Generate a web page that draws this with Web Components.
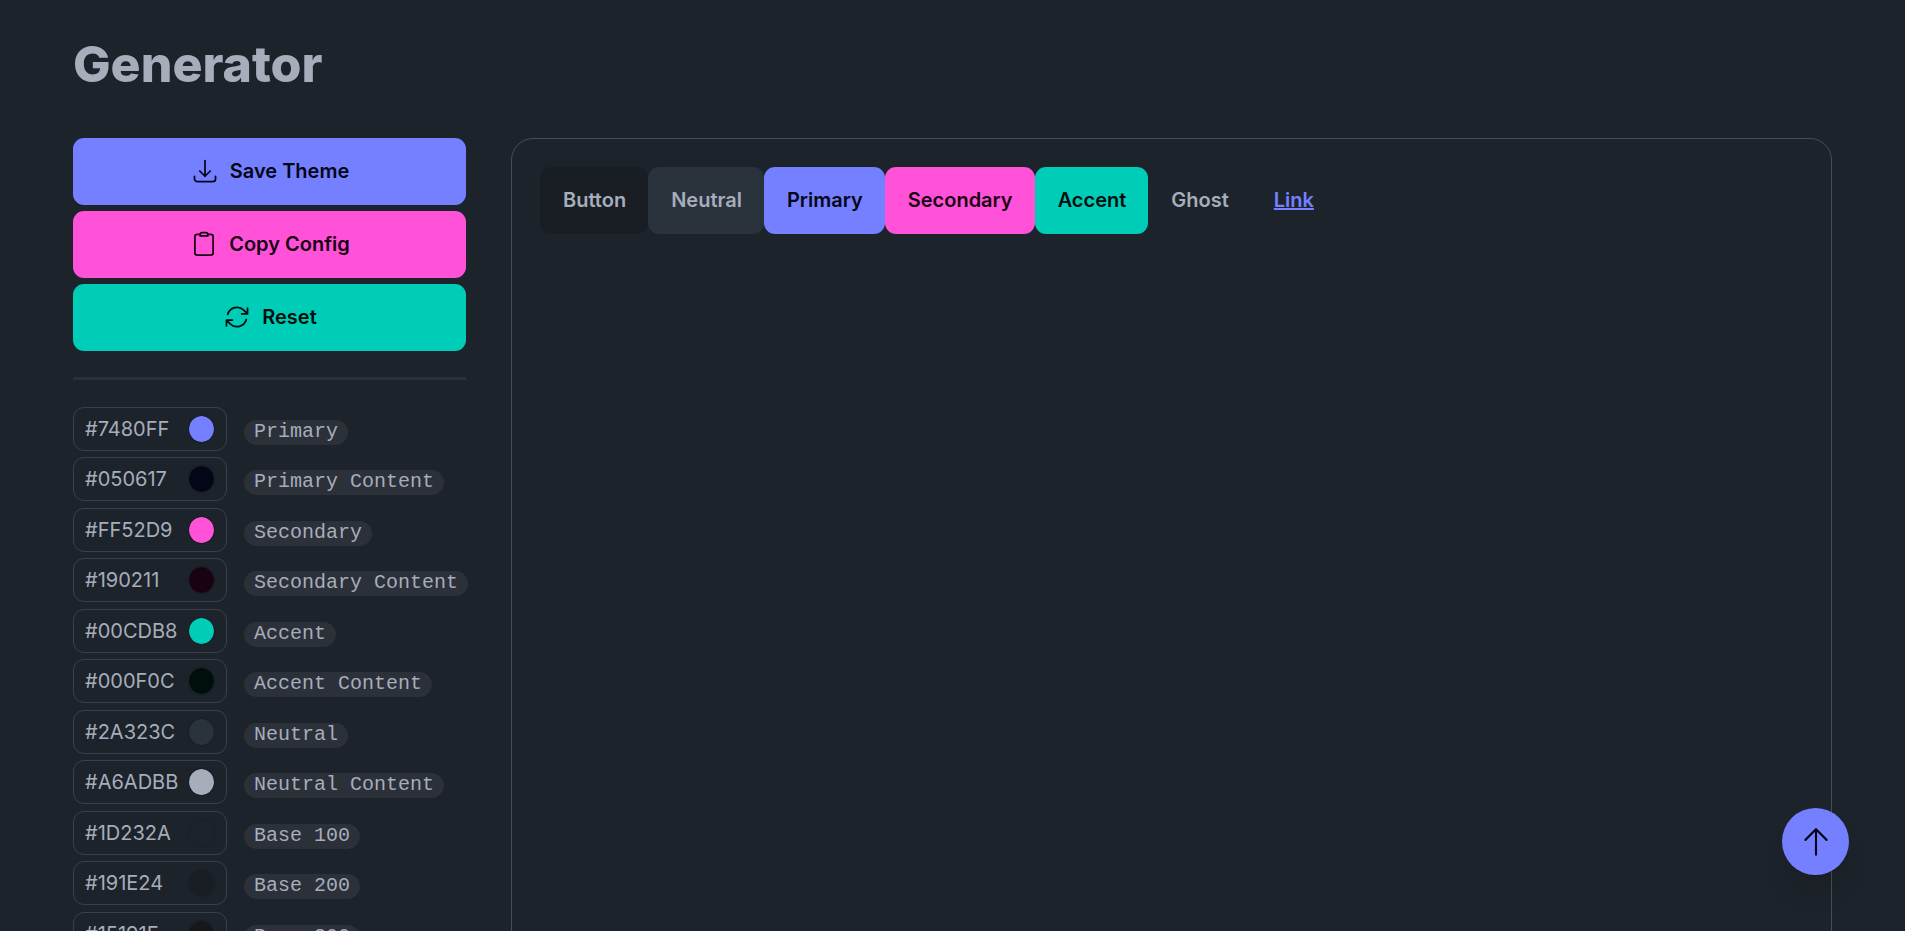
<!DOCTYPE html>
<html lang="en" data-theme="dark">
<head>
<meta charset="utf-8">
<meta name="viewport" content="width=device-width, initial-scale=1">
<title>Theme Generator</title>
<style>
  :root {
    --primary: #7480ff; --primary-content: #050617;
    --secondary: #ff52d9; --secondary-content: #190211;
    --accent: #00cdb8; --accent-content: #000f0c;
    --neutral: #2a323c; --content: #a6adbb;
    --base-100: #1d232a; --base-200: #191e24;
    --line: #3a4048; --muted: #2c3039;
  }
  html { background: var(--base-100); }
  body {
    margin: 0; height: 100vh; overflow: hidden;
    font: 20px/28px Inter, "Liberation Sans", sans-serif;
    color: var(--content);
  }
</style>
</head>
<body>
<theme-generator></theme-generator>
<script>
const ICONS = {
  save: '<path d="M3 16.5v2.25A2.25 2.25 0 0 0 5.25 21h13.5A2.25 2.25 0 0 0 21 18.75V16.5M16.5 12 12 16.5m0 0L7.5 12m4.5 4.500V3"/>',
  copy: '<path d="M8.600 3.800H6.200A2 2 0 0 0 4.200 5.800V19.500a2 2 0 0 0 2 2h11.600a2 2 0 0 0 2-2V5.800a2 2 0 0 0-2-2H15.400M10.600 2.300h2.800a2 2 0 0 1 2 2v.700H8.600v-.700a2 2 0 0 1 2-2z"/>',
  reset: '<path d="M16.023 9.348h4.992v-.001M2.985 19.644v-4.992m0 0h4.992m-4.993 0 3.181 3.183a8.250 8.250 0 0 0 13.803-3.700M4.031 9.865a8.250 8.250 0 0 1 13.803-3.700l3.181 3.182m0-4.991v4.990"/>',
  up: '<path d="M4.500 10.500 12 3m0 0 7.500 7.500M12 3v18"/>'
};

function define(name, html, setup) {
  const template = document.createElement('template');
  template.innerHTML = html;
  customElements.define(name, class extends HTMLElement {
    connectedCallback() {
      if (this.shadowRoot) return;
      this.attachShadow({ mode: 'open' }).append(template.content.cloneNode(true));
      if (setup) setup(this, this.shadowRoot);
    }
  });
}

define('ui-icon', `
  <style>
    :host { display: block; width: 28px; height: 28px; }
    svg { display: block; width: 100%; height: 100%; fill: none; stroke: currentColor;
      stroke-width: 1.5; stroke-linecap: round; stroke-linejoin: round; }
  </style>
  <svg viewBox="0 0 24 24" aria-hidden="true"></svg>`,
  (host, root) => { root.querySelector('svg').innerHTML = ICONS[host.getAttribute('name')]; });

define('ui-button', `
  <style>
    :host { display: block; --bg: var(--base-200); --fg: var(--content); }
    :host([kind=neutral]) { --bg: var(--neutral); }
    :host([kind=primary]) { --bg: var(--primary); --fg: var(--primary-content); }
    :host([kind=secondary]) { --bg: var(--secondary); --fg: var(--secondary-content); }
    :host([kind=accent]) { --bg: var(--accent); --fg: var(--accent-content); }
    :host([kind=ghost]) { --bg: transparent; }
    button { display: flex; align-items: center; justify-content: center; gap: 11px;
      width: 100%; height: 67px; padding: 0 22px 1px 23px; border: 0; border-radius: 11px;
      background: var(--bg); color: var(--fg); font: inherit; font-weight: 600; cursor: pointer; }
    :host([round]) button { width: 67px; padding: 0; border-radius: 50%; box-shadow: 0 22px 28px -6px #0000001a, 0 8px 11px -6px #0000001a; }
  </style>
  <button type="button"><slot></slot></button>`,
  (host, root) => {
    if (host.hasAttribute('label')) root.querySelector('button').setAttribute('aria-label', host.getAttribute('label'));
  });

define('color-row', `
  <style>
    :host { display: grid; grid-template-columns: 154px max-content; column-gap: 17px; }
    .field { display: flex; align-items: center; box-sizing: border-box; height: 44px;
      padding: 0 12px 0 11px; border: 1px solid var(--line); border-radius: 11px; }
    .hex { flex: 1; min-width: 0; height: 28px; padding: 0; border: 0; outline: 0; background: none; color: inherit; font: inherit; }
    .swatch { flex: none; appearance: none; width: 25px; height: 26px; padding: 0; border: 0; border-radius: 50%;
      background: none; box-shadow: 0 0 1px 1px #0000001a; overflow: hidden; cursor: pointer; }
    .swatch::-webkit-color-swatch-wrapper { padding: 0; }
    .swatch::-webkit-color-swatch { border: 0; border-radius: 50%; }
    label { margin-top: 13px; height: 25px; padding: 0 10px; border-radius: 13px; background: var(--muted);
      font: 20px/23px "Liberation Mono", monospace; white-space: nowrap; }
  </style>
  <div class="field"><input class="hex" id="hex" type="text" spellcheck="false"><input class="swatch" type="color"></div>
  <label for="hex"><slot></slot></label>`,
  (host, root) => {
    const hex = root.querySelector('.hex'), swatch = root.querySelector('.swatch');
    hex.value = host.getAttribute('value');
    swatch.value = hex.value.toLowerCase();
    swatch.setAttribute('aria-label', host.textContent + ' colour');
    swatch.addEventListener('input', () => { hex.value = swatch.value.toUpperCase(); });
  });

define('color-group', `
  <style>:host { display: grid; row-gap: 6px; }</style><slot></slot>`);

define('theme-preview', `
  <style>
    :host { display: block; box-sizing: border-box; padding: 28px; border: 1px solid #464d58; border-radius: 22px; }
    .buttons { display: flex; flex-wrap: wrap; align-items: center; }
    a { padding: 0 23px 1px; color: var(--primary); font-weight: 600; text-decoration: underline; }
  </style>
  <div class="buttons">
    <ui-button>Button</ui-button>
    <ui-button kind="neutral">Neutral</ui-button>
    <ui-button kind="primary">Primary</ui-button>
    <ui-button kind="secondary">Secondary</ui-button>
    <ui-button kind="accent">Accent</ui-button>
    <ui-button kind="ghost">Ghost</ui-button>
    <a href="#">Link</a>
  </div>`);

define('theme-generator', `
  <style>
    :host { display: flex; flex-direction: column; height: 100%; padding: 33px 73px 0; box-sizing: border-box; }
    h1 { margin: 0 0 43px; font-size: 50px; line-height: 62px; font-weight: 800; }
    main { flex: 1; min-height: 0; display: grid; grid-template-columns: 393px minmax(0, 1fr); column-gap: 45px; }
    .actions { display: grid; row-gap: 6px; }
    hr { height: 3px; margin: 26px 0 27px; border: 0; background: var(--muted); }
    .colors { display: grid; row-gap: 7px; }
    .top { position: fixed; right: 56px; bottom: 56px; }
    .top ui-icon { width: 34px; height: 34px; }
  </style>
  <h1>Generator</h1>
  <main>
    <aside>
      <div class="actions">
        <ui-button kind="primary"><ui-icon name="save"></ui-icon>Save Theme</ui-button>
        <ui-button kind="secondary"><ui-icon name="copy"></ui-icon>Copy Config</ui-button>
        <ui-button kind="accent"><ui-icon name="reset"></ui-icon>Reset</ui-button>
      </div>
      <hr>
      <div class="colors">
        <color-group>
          <color-row value="#7480FF">Primary</color-row>
          <color-row value="#050617">Primary Content</color-row>
        </color-group>
        <color-group>
          <color-row value="#FF52D9">Secondary</color-row>
          <color-row value="#190211">Secondary Content</color-row>
        </color-group>
        <color-group>
          <color-row value="#00CDB8">Accent</color-row>
          <color-row value="#000F0C">Accent Content</color-row>
        </color-group>
        <color-group>
          <color-row value="#2A323C">Neutral</color-row>
          <color-row value="#A6ADBB">Neutral Content</color-row>
        </color-group>
        <color-group>
          <color-row value="#1D232A">Base 100</color-row>
          <color-row value="#191E24">Base 200</color-row>
        </color-group>
        <color-group>
          <color-row value="#15191E">Base 300</color-row>
        </color-group>
      </div>
    </aside>
    <theme-preview></theme-preview>
  </main>
  <ui-button class="top" kind="primary" round label="Back to top"><ui-icon name="up"></ui-icon></ui-button>`);
</script>
</body>
</html>
